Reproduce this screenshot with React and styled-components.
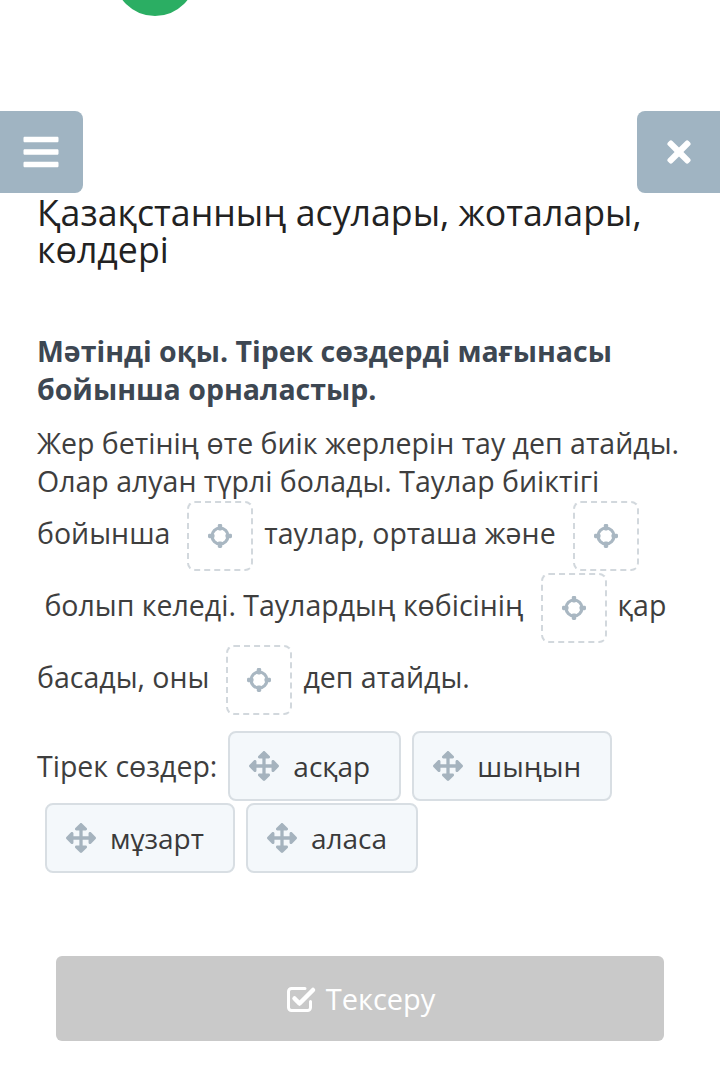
import React from 'react'
import styled, { createGlobalStyle } from 'styled-components'
import { FaBars, FaTimes, FaArrowsAlt } from 'react-icons/fa'

const GlobalStyle = createGlobalStyle`
  body {
    margin: 0;
    background: #fff;
    font-family: "Open Sans", "Noto Sans", sans-serif;
  }
`

// target mark shown inside an empty drop slot
const Crosshair = () => (
  <svg width="30" height="30" viewBox="0 0 30 30" fill="none">
    <circle cx="15" cy="15" r="8" stroke="#a9b7c2" strokeWidth="3" />
    <rect x="12.8" y="3" width="4.4" height="6.5" rx="1.4" fill="#a9b7c2" />
    <rect x="12.8" y="20.5" width="4.4" height="6.5" rx="1.4" fill="#a9b7c2" />
    <rect x="3" y="12.8" width="6.5" height="4.4" rx="1.4" fill="#a9b7c2" />
    <rect x="20.5" y="12.8" width="6.5" height="4.4" rx="1.4" fill="#a9b7c2" />
  </svg>
)

// open square with a check breaking out of it
const CheckIcon = () => (
  <svg width="32" height="30" viewBox="0 0 32 30" fill="none" stroke="#fff" strokeLinecap="round" strokeLinejoin="round">
    <path d="M20 4.5H6.5a3 3 0 0 0-3 3v16a3 3 0 0 0 3 3h16a3 3 0 0 0 3-3v-6" strokeWidth="3" />
    <path d="M9.5 14.5l5 5L28 6" strokeWidth="4.5" />
  </svg>
)

const words = ['асқар', 'шыңын', 'мұзарт', 'аласа']

function App() {
  return (
    <Page>
      <GlobalStyle />
      <Header>
        <Avatar />
      </Header>
      <Toolbar>
        <IconButton side='left'><FaBars /></IconButton>
        <IconButton side='right'><FaTimes /></IconButton>
      </Toolbar>
      <Content>
        <Title>Қазақстанның асулары, жоталары, көлдері</Title>
        <Instruction>Мәтінді оқы. Тірек сөздерді мағынасы бойынша орналастыр.</Instruction>
        <Text>
          Жер бетінің өте биік жерлерін тау деп атайды. Олар алуан түрлі болады. Таулар биіктігі бойынша
          <Zone><Crosshair /></Zone>
          таулар, орташа және
          <Zone><Crosshair /></Zone>
          {'\u00a0болып келеді. Таулардың көбісінің'}
          <Zone><Crosshair /></Zone>
          қар басады, оны
          <Zone><Crosshair /></Zone>
          деп атайды.
        </Text>
        <Words>
          <Label>Тірек сөздер:</Label>
          {words.map((w) => (
            <Chip key={w}>
              <FaArrowsAlt />
              <span>{w}</span>
            </Chip>
          ))}
        </Words>
        <CheckButton>
          <CheckIcon />
          Тексеру
        </CheckButton>
      </Content>
    </Page>
  )
}

const Page = styled.div`
  width: 720px;
  min-height: 1070px;
  overflow: hidden;
`

const Header = styled.div`
  display: flow-root;
  height: 111px;
`

const Avatar = styled.div`
  width: 82px;
  height: 82px;
  margin: -66px 0 0 114px;
  border-radius: 50%;
  background: #2bae63;
`

const Toolbar = styled.div`
  display: flex;
  justify-content: space-between;
  height: 82px;
`

const IconButton = styled.div`
  width: 83px;
  height: 82px;
  display: flex;
  align-items: center;
  justify-content: center;
  background: #a0b4c2;
  color: #fff;
  font-size: ${(p) => (p.side === 'left' ? '40px' : '34px')};
  border-radius: ${(p) => (p.side === 'left' ? '0 8px 8px 0' : '8px 0 0 8px')};
  svg {
    margin-left: ${(p) => (p.side === 'left' ? '-1px' : '0')};
  }
`

const Content = styled.div`
  padding: 0 37px;
`

const Title = styled.h1`
  margin: 1px 0 0;
  font-size: 35.7px;
  line-height: 37px;
  font-weight: 400;
  color: #222;
`

const Instruction = styled.h2`
  margin: 64px 0 0;
  font-size: 28.5px;
  line-height: 38px;
  font-weight: 700;
  color: #3d4752;
`

const Text = styled.p`
  margin: 16px 0 0;
  font-size: 28.5px;
  line-height: 38px;
  color: #3e3e3e;
`

const Zone = styled.span`
  display: inline-flex;
  align-items: center;
  justify-content: center;
  box-sizing: border-box;
  width: 66px;
  height: 70px;
  margin: 1px 11px 1px 17px;
  vertical-align: middle;
  border: 2px dashed #d2d8dd;
  border-radius: 8px;
`

const Words = styled.div`
  display: flex;
  flex-wrap: wrap;
  align-items: center;
  column-gap: 3px;
  row-gap: 2px;
  margin-top: 15px;
`

const Label = styled.span`
  font-size: 28.5px;
  color: #3e3e3e;
`

const Chip = styled.div`
  display: flex;
  align-items: center;
  gap: 14px;
  box-sizing: border-box;
  height: 70px;
  margin-left: 8px;
  padding: 0 29px 0 19px;
  background: #f4f8fb;
  border: 2px solid #d8dee3;
  border-radius: 8px;
  font-size: 28px;
  color: #3a3a3a;
  svg {
    width: 30px;
    height: 30px;
    color: #a5b3be;
  }
`

const CheckButton = styled.div`
  display: flex;
  align-items: center;
  justify-content: center;
  gap: 9px;
  width: 608px;
  height: 85px;
  margin: 83px 0 0 19px;
  background: #c9c9c9;
  border-radius: 6px;
  color: #fff;
  font-size: 29px;
`

export default App
